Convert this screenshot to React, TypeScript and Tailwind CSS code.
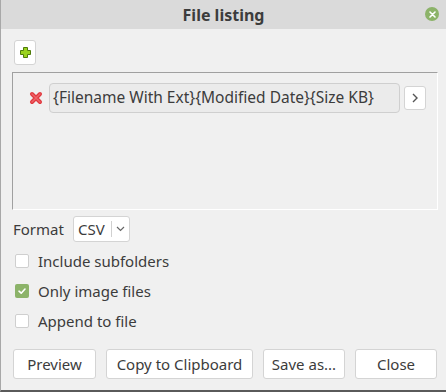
import { useState } from "react";

function PlusIcon() {
  return (
    <svg width="11" height="11" viewBox="0 0 11 11">
      <path
        d="M3.5 0.5h4v3h3v4h-3v3h-4v-3h-3v-4h3z"
        fill="#9ad21e"
        stroke="#4e7a0a"
        strokeWidth="1"
      />
    </svg>
  );
}

function RemoveIcon() {
  return (
    <svg width="14" height="14" viewBox="0 0 14 14">
      <path d="M3 3L11 11M11 3L3 11" stroke="#e0383e" strokeWidth="4" strokeLinecap="round" />
      <path d="M3 3L11 11M11 3L3 11" stroke="#ef6368" strokeWidth="1.5" strokeLinecap="round" />
    </svg>
  );
}

function Checkbox({ checked, label, onToggle }: { checked: boolean; label: string; onToggle: () => void }) {
  return (
    <label className="flex items-center gap-[9px] h-[30px] pl-[3px] cursor-pointer" onClick={onToggle}>
      {checked ? (
        <span className="w-[14px] h-[14px] rounded-[2px] bg-[#8cb369] flex items-center justify-center">
          <svg width="10" height="10" viewBox="0 0 10 10">
            <path d="M2 5.2L4.2 7.2L8 3" stroke="white" strokeWidth="1.6" fill="none" strokeLinecap="round" strokeLinejoin="round" />
          </svg>
        </span>
      ) : (
        <span className="w-[14px] h-[14px] rounded-[2px] bg-white border border-[#cfcfcf]" />
      )}
      <span className="text-[15px] text-[#3c3c3c]">{label}</span>
    </label>
  );
}

export default function App() {
  const [subfolders, setSubfolders] = useState(false);
  const [imagesOnly, setImagesOnly] = useState(true);
  const [append, setAppend] = useState(false);

  const buttons = [
    { label: "Preview", w: "w-[83px]" },
    { label: "Copy to Clipboard", w: "w-[147px]" },
    { label: "Save as...", w: "w-[82px]" },
    { label: "Close", w: "w-[82px]" },
  ];

  return (
    <div
      className="w-[446px] h-[392px] bg-[#f0f0f0] border-l border-l-[#a8a8a8] border-b-2 border-b-[#5a5a5a] flex flex-col text-[#3c3c3c]"
      style={{ fontFamily: '"Noto Sans", "Open Sans", sans-serif' }}
    >
      {/* Title bar */}
      <div className="relative h-[29px] bg-[#dadada] flex items-center justify-center shrink-0">
        <span className="text-[16px] font-bold text-[#3c3c3c] leading-none">File listing</span>
        <button className="absolute right-[7px] top-[7px] w-[14px] h-[14px] rounded-full bg-[#8cb369] flex items-center justify-center">
          <svg width="7" height="7" viewBox="0 0 7 7">
            <path d="M1 1L6 6M6 1L1 6" stroke="white" strokeWidth="1.6" strokeLinecap="round" />
          </svg>
        </button>
      </div>

      <div className="flex flex-col pl-[11px] pr-[8px] pt-[11px]">
        {/* Add button */}
        <button className="ml-[2px] w-[22px] h-[25px] bg-white border border-[#d4d4d4] rounded-[3px] flex items-center justify-center">
          <PlusIcon />
        </button>

        {/* Listing panel */}
        <div className="mt-[7px] h-[138px] border-t border-l border-[#a0a0a0] border-r border-b border-r-white border-b-white pt-[10px]">
          <div className="flex items-center">
            <span className="ml-[16px] mr-[6px] flex items-center">
              <RemoveIcon />
            </span>
            <div className="w-[351px] h-[30px] bg-[#ebebeb] border border-[#cfcfcf] rounded-[4px] flex items-center pl-[3px] text-[15.5px] text-[#3c3c3c] whitespace-nowrap overflow-hidden">
              {"{Filename With Ext}{Modified Date}{Size KB}"}
            </div>
            <button className="ml-[4px] w-[22px] h-[24px] bg-white border border-[#d4d4d4] rounded-[3px] flex items-center justify-center">
              <svg width="8" height="10" viewBox="0 0 8 10">
                <path d="M2 1L6 5L2 9" stroke="#555" strokeWidth="1.4" fill="none" />
              </svg>
            </button>
          </div>
        </div>

        {/* Format */}
        <div className="mt-[6px] flex items-center h-[26px]">
          <span className="ml-[1px] text-[15px]">Format</span>
          <div className="ml-[9px] w-[57px] h-[26px] bg-white border border-[#d4d4d4] rounded-[3px] flex items-center">
            <span className="pl-[4px] text-[15px]">CSV</span>
            <span className="ml-[6px] w-px h-[16px] bg-[#d0d0d0]" />
            <svg className="ml-[4px]" width="9" height="6" viewBox="0 0 9 6">
              <path d="M1 1L4.5 4.5L8 1" stroke="#666" strokeWidth="1.2" fill="none" />
            </svg>
          </div>
        </div>

        {/* Options */}
        <div className="mt-[4px] flex flex-col">
          <Checkbox checked={subfolders} label="Include subfolders" onToggle={() => setSubfolders(!subfolders)} />
          <Checkbox checked={imagesOnly} label="Only image files" onToggle={() => setImagesOnly(!imagesOnly)} />
          <Checkbox checked={append} label="Append to file" onToggle={() => setAppend(!append)} />
        </div>

        {/* Actions */}
        <div className="mt-[13px] ml-[1px] flex gap-[10px]">
          {buttons.map((b) => (
            <button
              key={b.label}
              className={`${b.w} h-[30px] bg-white border border-[#d4d4d4] rounded-[3px] text-[15px] text-[#3c3c3c]`}
            >
              {b.label}
            </button>
          ))}
        </div>
      </div>
    </div>
  );
}
